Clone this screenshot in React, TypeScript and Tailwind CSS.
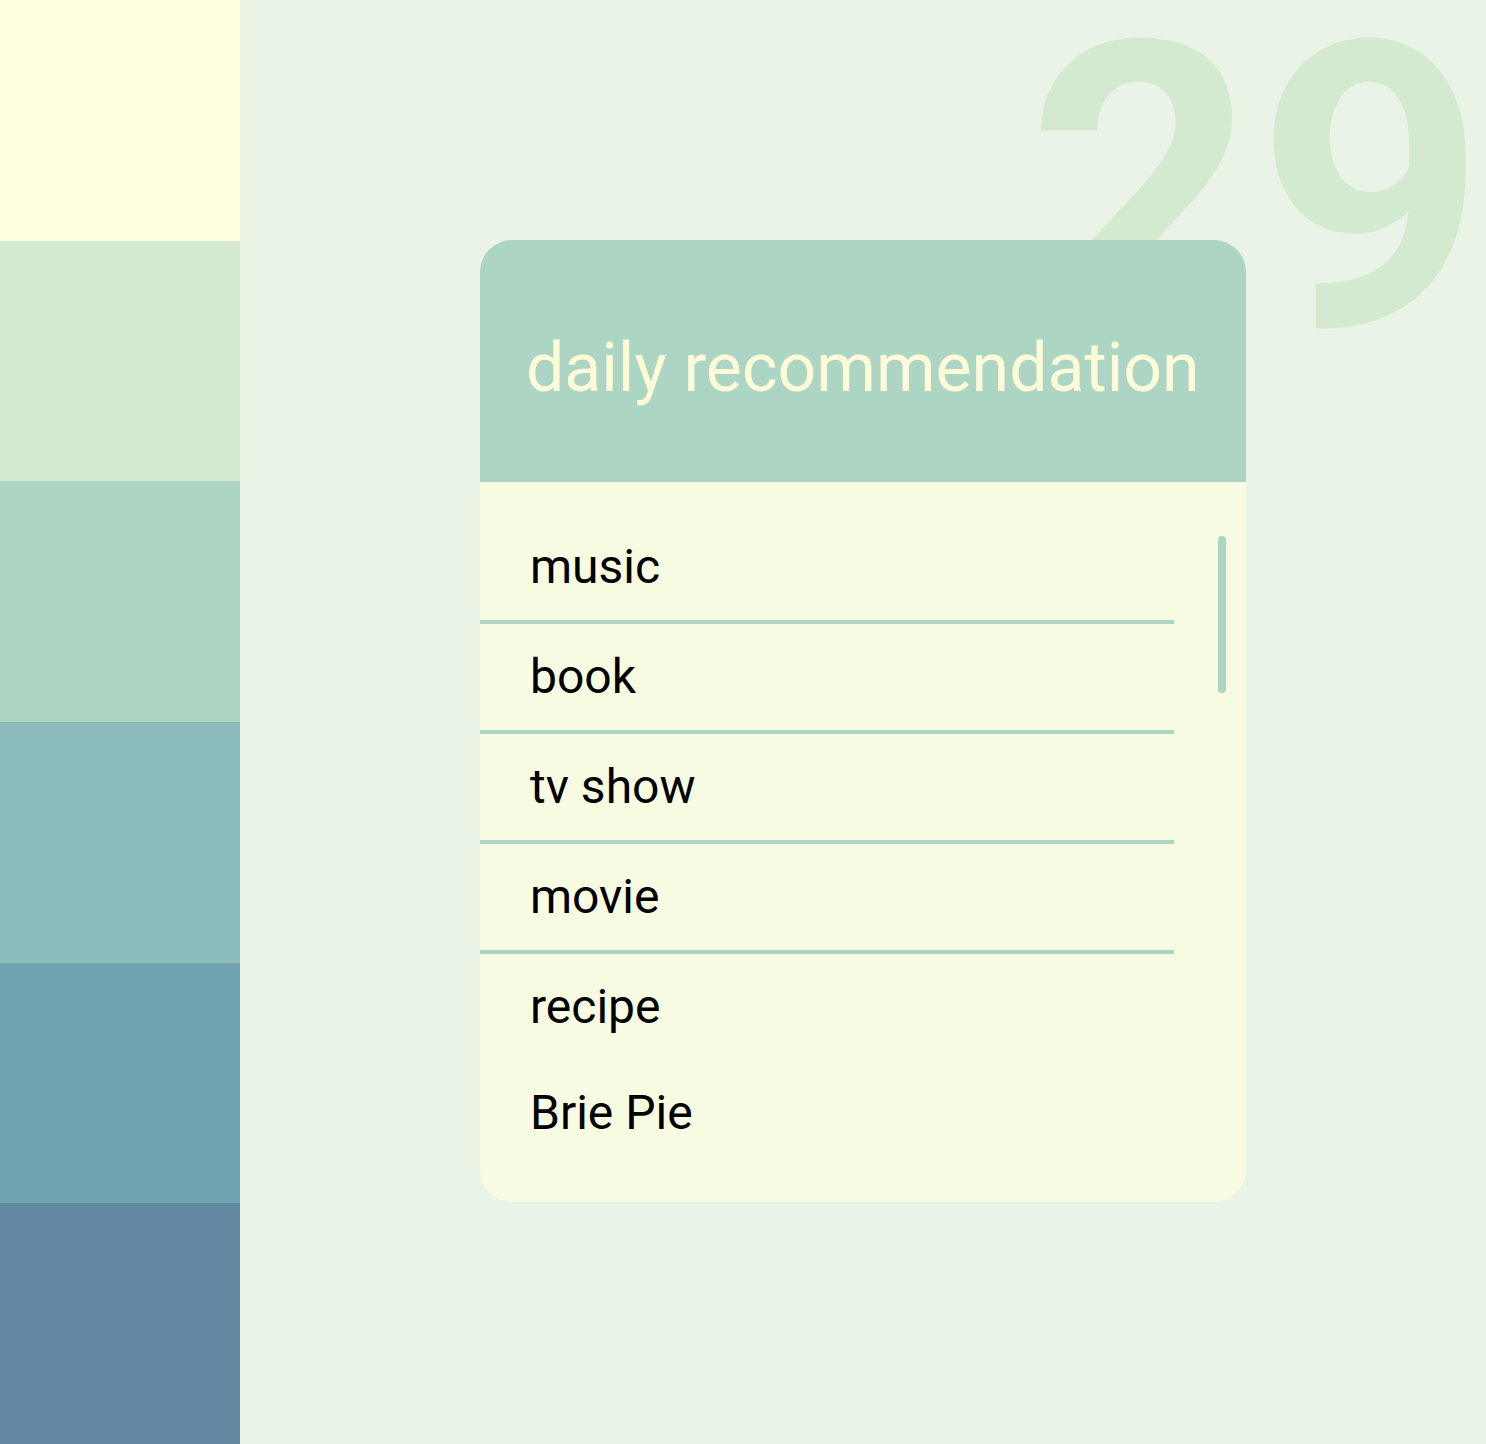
const swatches = [
  "bg-[#ffffe0]",
  "bg-[#d3ead0]",
  "bg-[#acd5c4]",
  "bg-[#8bbbbb]",
  "bg-[#70a4b1]",
  "bg-[#6489a5]",
];

const items = [
  { label: "music", line: true },
  { label: "book", line: true },
  { label: "tv show", line: true },
  { label: "movie", line: true },
  { label: "recipe", line: false },
  { label: "Brie Pie", line: false },
];

const App = () => {
  return (
    <main
      className="flex h-screen w-full overflow-hidden bg-[#eaf4e6]"
      style={{ fontFamily: "Roboto, 'Noto Sans', sans-serif" }}
    >
      {/* Palette strip */}
      <aside className="flex h-full w-[240px] shrink-0 flex-col">
        {swatches.map((c) => (
          <div key={c} className={`flex-1 ${c}`}></div>
        ))}
      </aside>

      {/* Content */}
      <section className="relative flex-1 pl-[240px] pt-[240px]">
        {/* Day number */}
        <div className="pointer-events-none absolute right-0 top-[-10px] select-none text-[400px] font-bold leading-none text-[#d3ead0]">
          29
        </div>

        {/* Card */}
        <div className="relative z-10 flex h-[962px] w-[766px] flex-col overflow-hidden rounded-[32px] bg-[#f7fbe1]">
          <div className="flex h-[242px] shrink-0 items-center bg-[#acd5c4] pl-[46px] pt-[14px]">
            <h1 className="text-[68px] font-normal leading-none text-[#fdfbd8]">
              daily recommendation
            </h1>
          </div>

          <div className="relative flex-1 pr-[72px] pt-[32px]">
            <ul>
              {items.map((item) => (
                <li
                  key={item.label}
                  className={
                    item.line
                      ? "flex h-[110px] items-center border-b-4 border-[#acd5c4] pl-[50px] text-[48px] leading-none text-black"
                      : "flex h-[106px] items-center pl-[50px] text-[48px] leading-none text-black"
                  }
                >
                  {item.label}
                </li>
              ))}
            </ul>
            {/* Scroll thumb */}
            <div className="absolute right-[20px] top-[54px] h-[157px] w-[8px] rounded-full bg-[#acd5c4]"></div>
          </div>
        </div>
      </section>
    </main>
  );
};

export default App;
